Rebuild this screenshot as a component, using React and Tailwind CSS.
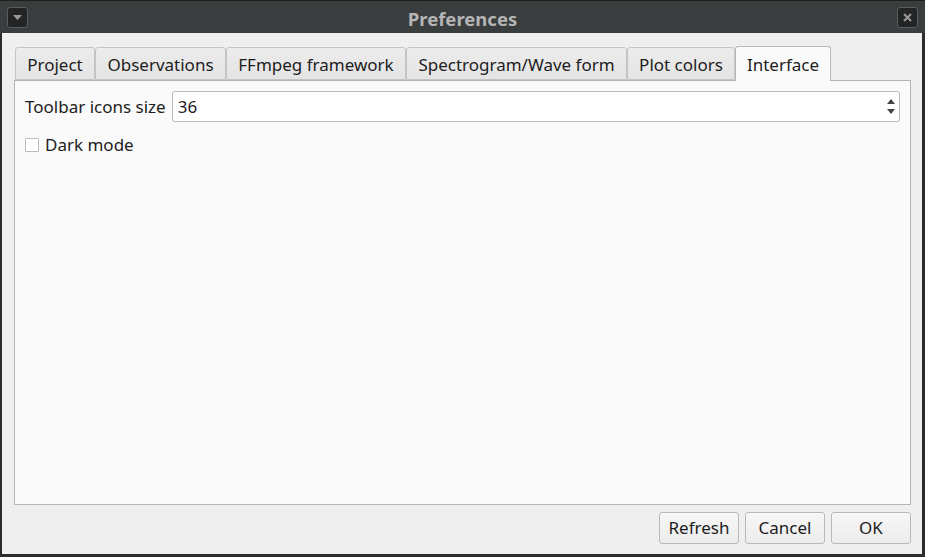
import React from 'react';

const tabs = [
  { label: 'Project', w: 'w-[80px]' },
  { label: 'Observations', w: 'w-[131px]' },
  { label: 'FFmpeg framework', w: 'w-[180px]' },
  { label: 'Spectrogram/Wave form', w: 'w-[221px]' },
  { label: 'Plot colors', w: 'w-[108px]' },
];

const TitleButton = ({ children }) => (
  <div className="w-[21px] h-[21px] rounded-[3px] border border-[#5a5d5e] bg-[#232425] flex items-center justify-center">
    {children}
  </div>
);

const Btn = ({ children }) => (
  <button className="w-[80px] h-[32px] rounded-[3px] border border-[#b9b9b9] bg-gradient-to-b from-[#f7f7f7] to-[#ececec] text-[17px] text-[#1d1d1d]">
    {children}
  </button>
);

export default function App() {
  return (
    <div
      className="w-[925px] h-[557px] flex flex-col bg-[#2c2c2c] overflow-hidden"
      style={{ fontFamily: '"Noto Sans", "DejaVu Sans", sans-serif' }}
    >
      {/* title bar */}
      <div className="h-[33px] shrink-0 border-t border-[#1e1e1e] bg-[#393d3e] flex items-center justify-between px-[7px]">
        <TitleButton>
          <svg width="9" height="5" viewBox="0 0 9 5"><path d="M0 0h9L4.5 5z" fill="#9a9a9a" /></svg>
        </TitleButton>
        <span className="text-[18.5px] font-bold text-[#b5b5b5] pt-[3px]">Preferences</span>
        <TitleButton>
          <svg width="9" height="9" viewBox="0 0 9 9"><path d="M1 1l7 7M8 1L1 8" stroke="#9a9a9a" strokeWidth="2" /></svg>
        </TitleButton>
      </div>

      {/* body */}
      <div className="flex-1 ml-[2px] mr-[3px] mb-[3px] bg-[#efefef] flex flex-col text-[#1d1d1d] text-[17px]">
        <div className="flex items-end pl-[13px] pt-[12px] h-[47px] shrink-0">
          {tabs.map((t) => (
            <div
              key={t.label}
              className={`${t.w} h-[33px] pt-[2px] flex items-center justify-center rounded-t-[3px] border border-[#c4c4c4] bg-gradient-to-b from-[#ececec] to-[#e4e4e4]`}
            >
              {t.label}
            </div>
          ))}
          <div className="w-[96px] h-[35px] pt-[1px] relative z-10 -mb-px flex items-center justify-center rounded-t-[3px] border border-b-0 border-[#b9b9b9] bg-[#fafafa]">
            Interface
          </div>
        </div>

        <div className="ml-[12px] mr-[11px] h-[425px] border border-[#b5b5b5] bg-[#fafafa] px-[10px] pt-[10px] flex flex-col gap-[10px]">
          <div className="flex items-center gap-[6px]">
            <span>Toolbar icons size</span>
            <div className="flex-1 h-[31px] rounded-[3px] border border-[#bcbcbc] bg-white flex items-center">
              <span className="flex-1 pl-[5px] pt-[1px]">36</span>
              <div className="w-[14px] h-full flex flex-col items-center justify-center gap-[5px] pr-[2px]">
                <svg width="8" height="5" viewBox="0 0 8 5"><path d="M4 0l4 5H0z" fill="#444" /></svg>
                <svg width="8" height="5" viewBox="0 0 8 5"><path d="M0 0h8L4 5z" fill="#444" /></svg>
              </div>
            </div>
          </div>
          <div className="flex items-center gap-[6px]">
            <div className="w-[14px] h-[14px] border border-[#bdbdbd] bg-white rounded-[1px]" />
            <span>Dark mode</span>
          </div>
        </div>

        <div className="flex justify-end gap-[6px] pr-[11px] pt-[7px]">
          <Btn>Refresh</Btn>
          <Btn>Cancel</Btn>
          <Btn>OK</Btn>
        </div>
      </div>
    </div>
  );
}
